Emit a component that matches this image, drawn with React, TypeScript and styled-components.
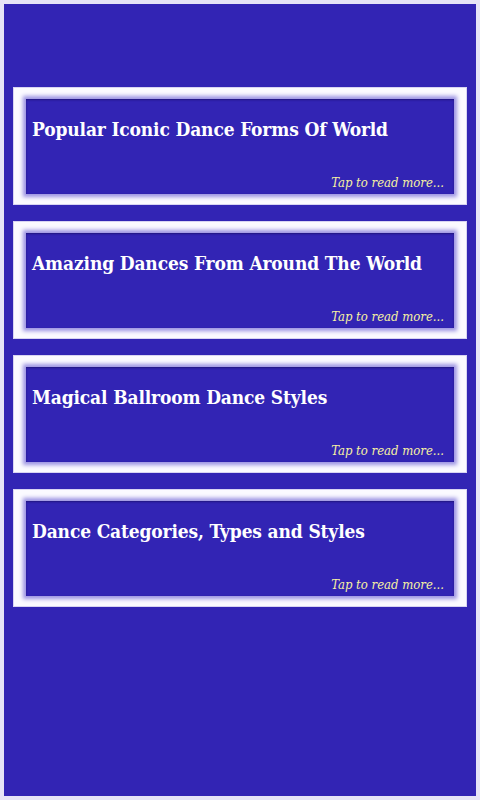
import React from 'react';
import styled, { createGlobalStyle } from 'styled-components';

const GlobalStyle = createGlobalStyle`
  html, body {
    margin: 0;
    padding: 0;
    background: #e6e4f7;
  }
  * {
    box-sizing: border-box;
  }
`;

const Page = styled.div`
  min-height: 800px;
  border: 4px solid #e6e4f7;
  background: #3224b4;
  padding: 83px 9px 20px;
  display: flex;
  flex-direction: column;
  gap: 16px;
`;

const Card = styled.div`
  height: 118px;
  padding: 11px 12px 10px;
  background: #fbfaff;
  border: 1px solid #d8d4f2;
  cursor: pointer;
`;

const CardInner = styled.div`
  height: 100%;
  background: #3224b4;
  box-shadow: 0 0 4px 3px #9b92e2, inset 0 1px 2px rgba(20, 10, 90, 0.6);
  display: flex;
  flex-direction: column;
  justify-content: space-between;
  padding: 18px 10px 2px 6px;
`;

const Title = styled.h2`
  margin: 0;
  font-family: "DejaVu Serif", "Liberation Serif", serif;
  font-stretch: condensed;
  font-weight: bold;
  font-size: 19px;
  letter-spacing: -0.15px;
  line-height: 24px;
  color: #ffffff;
  white-space: nowrap;
`;

const ReadMore = styled.span`
  align-self: flex-end;
  font-family: "DejaVu Serif", "Liberation Serif", serif;
  font-stretch: condensed;
  font-style: italic;
  font-size: 13px;
  line-height: 18px;
  color: #f6f1a2;
`;

const topics = [
  'Popular Iconic Dance Forms Of World',
  'Amazing Dances From Around The World',
  'Magical Ballroom Dance Styles',
  'Dance Categories, Types and Styles',
];

export default function App() {
  return (
    <>
      <GlobalStyle />
      <Page>
        {topics.map((topic) => (
          <Card key={topic}>
            <CardInner>
              <Title>{topic}</Title>
              <ReadMore>Tap to read more...</ReadMore>
            </CardInner>
          </Card>
        ))}
      </Page>
    </>
  );
}
